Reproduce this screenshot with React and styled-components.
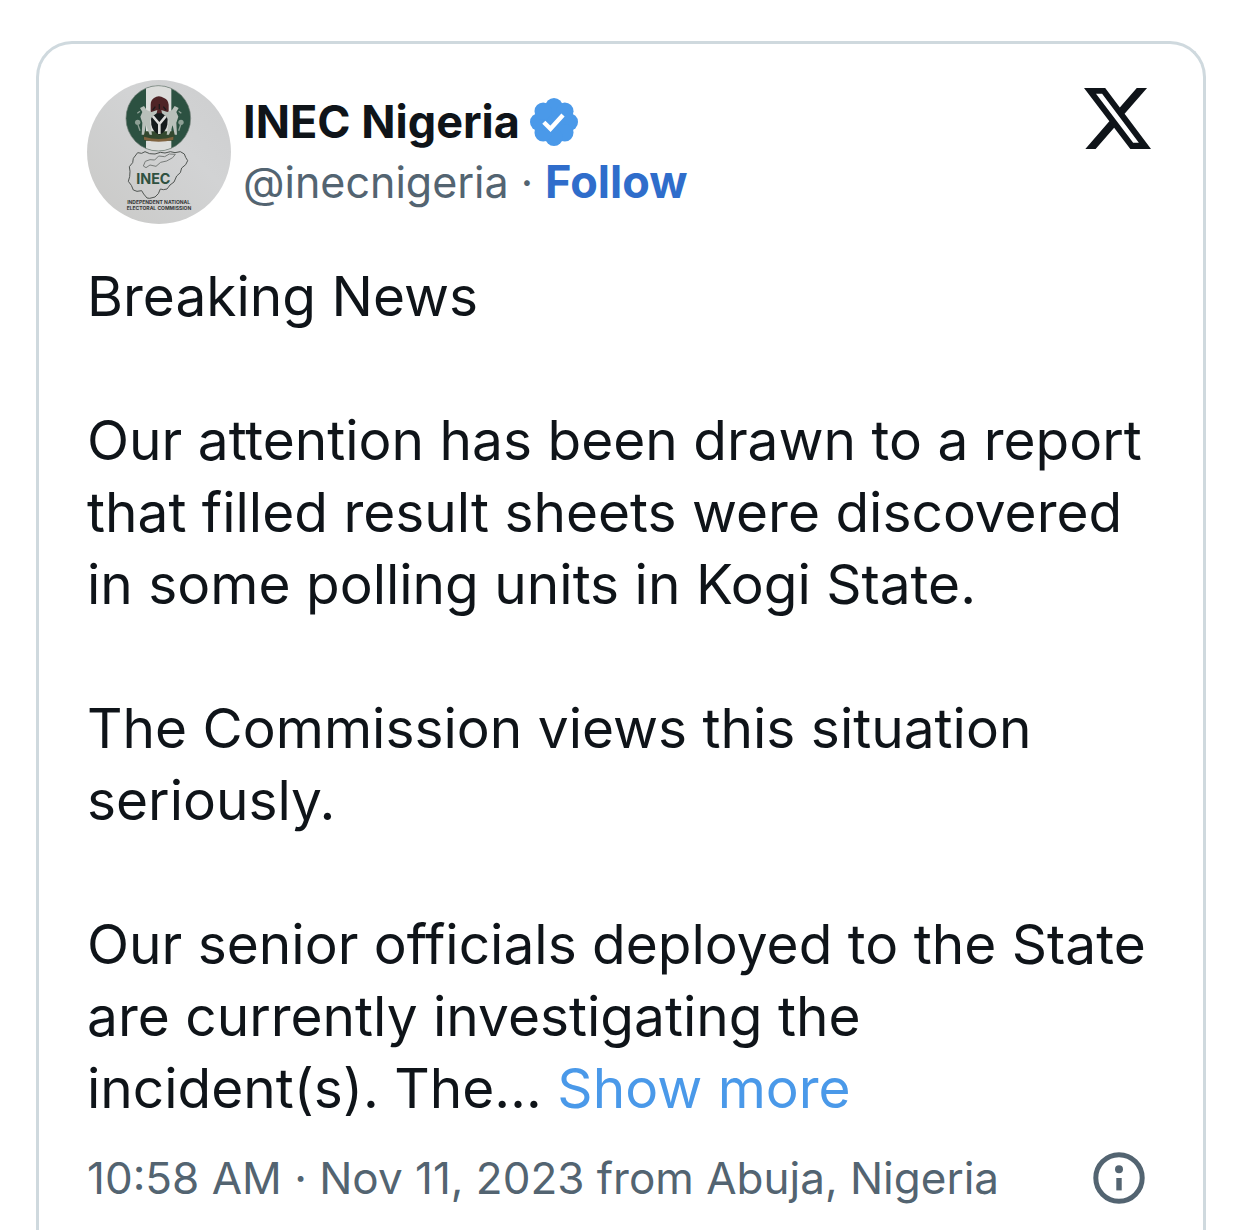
import styled, { createGlobalStyle } from "styled-components";

const paragraphs = [
  "Breaking News",
  "Our attention has been drawn to a report that filled result sheets were discovered in some polling units in Kogi State.",
  "The Commission views this situation seriously.",
];

const petals = [0, 45, 90, 135, 180, 225, 270, 315];

function AvatarImage() {
  return (
    <svg viewBox="21 24 432 432" role="img" aria-label="INEC Nigeria">
      <defs>
        <linearGradient id="paper" x1="0" y1="1" x2="1" y2="0">
          <stop offset="0" stopColor="#c9c9c7" />
          <stop offset="0.6" stopColor="#d2d3d4" />
          <stop offset="1" stopColor="#cdcecf" />
        </linearGradient>
        <clipPath id="seal">
          <ellipse cx="235" cy="139" rx="97" ry="98" />
        </clipPath>
      </defs>
      <rect x="21" y="24" width="432" height="432" fill="url(#paper)" />

      {/* coat of arms on the flag */}
      <g clipPath="url(#seal)">
        <rect x="138" y="40" width="194" height="200" fill="#2c5141" />
        <rect x="198" y="40" width="76" height="200" fill="#dcdddb" />
        <path d="M184 178h104l-8 28h-88z" fill="#33482f" />
        <path d="M192 194q44 14 88 0v9q-44 12-88 0z" fill="#80633f" />
        <path
          d="M222 78q14-10 30 0 12 4 14 20v24l-12 14h-30l-12-14v-24q0-14 10-20z"
          fill="#4f2426"
        />
        <path
          d="M226 104l-8 10M250 104l8 10M238 96v16"
          fill="none"
          stroke="#1c1a1c"
          strokeWidth="4"
        />
        <path d="M212 124h52l-2 34q-4 22-24 30-20-8-24-30z" fill="#151b1c" />
        <path
          d="M218 132l20 24 20-24M238 154v32"
          fill="none"
          stroke="#dcdcda"
          strokeWidth="8"
        />
        <path
          d="M180 108l12-6 8 12 14 6 18-6-2 10-14 10-6 14 6 40h-7l-11-28-6 28h-7l2-36-6-18 6-14z"
          fill="#b9c0ba"
        />
        <path
          d="M296 108l-12-6-8 12-14 6-18-6 2 10 14 10 6 14-6 40h7l11-28 6 28h7l-2-36 6-18-6-14z"
          fill="#b9c0ba"
        />
        <g fill="#8fa196">
          <circle cx="173" cy="151" r="8" />
          <circle cx="303" cy="151" r="8" />
        </g>
        <path
          d="M174 158l6 18M302 158l-6 18M180 118l-8 6M296 118l8 6"
          fill="none"
          stroke="#8fa196"
          strokeWidth="4"
        />
      </g>
      <ellipse
        cx="235"
        cy="139"
        rx="97"
        ry="98"
        fill="none"
        stroke="#6f7d75"
        strokeWidth="2"
      />

      {/* outline of the country */}
      <path
        d="M173 242l12 2 10-5 14 6 16 1 16-5 14 2 16-4 14 3 16-3 12 7 4 10 6 10-6 12-12 10-4 14-11 10-8 18-12 9-9 12-11 2-9-2-6 14-10 10-16 4-8-1-10-12-6-10-14 2-11-4-6-14-9-12 4-14 1-16-2-14 10-12 2-13z"
        fill="none"
        stroke="#505552"
        strokeWidth="3"
        strokeLinejoin="round"
      />
      <path
        d="M190 282l6-14 14-5 14 1 12-12 18 2 14-8 18 1-8 10-18 10-18 4-14 12-18-4-12 8z"
        fill="none"
        stroke="#777b79"
        strokeWidth="3"
        strokeLinejoin="round"
      />
      <AvatarText x="220" y="335" fontSize="43" fill="#2f5140">
        INEC
      </AvatarText>
      <AvatarText x="236" y="396" fontSize="15" fill="#343638">
        INDEPENDENT NATIONAL
      </AvatarText>
      <AvatarText x="237" y="415" fontSize="15" fill="#343638">
        ELECTORAL COMMISSION
      </AvatarText>
    </svg>
  );
}

function VerifiedBadge() {
  return (
    <svg
      width="48"
      height="48"
      viewBox="0 0 48 48"
      role="img"
      aria-label="Verified account"
    >
      <g fill="#4a99e9">
        <circle cx="24" cy="24" r="18" />
        {petals.map((angle) => (
          <circle
            key={angle}
            cx="24"
            cy="8.7"
            r="8.7"
            transform={`rotate(${angle} 24 24)`}
          />
        ))}
      </g>
      <path
        d="M13.8 24.2l6.7 6.6L33 17"
        fill="none"
        stroke="#fff"
        strokeWidth="4.4"
      />
    </svg>
  );
}

function XLogo() {
  return (
    <svg
      width="67"
      height="61"
      viewBox="1.254 2.25 21.573 19.5"
      preserveAspectRatio="none"
      aria-hidden="true"
    >
      <path
        d="M18.244 2.25h3.308l-7.227 8.26 8.502 11.24H16.17l-5.214-6.817L4.99 21.75H1.68l7.73-8.835L1.254 2.25H8.08l4.713 6.231zm-1.161 17.52h1.833L7.084 4.126H5.117z"
        fill="#0f1419"
      />
    </svg>
  );
}

function InfoIcon() {
  return (
    <svg width="52" height="52" viewBox="0 0 52 52" aria-hidden="true">
      <circle
        cx="26"
        cy="26"
        r="23.2"
        fill="none"
        stroke="#536471"
        strokeWidth="5"
      />
      <circle cx="26" cy="17.3" r="4" fill="#536471" />
      <rect x="23.3" y="26" width="5.4" height="12.4" fill="#536471" />
    </svg>
  );
}

export default function App() {
  return (
    <>
      <GlobalStyle />
      <Page>
        <Card>
          <Header>
            <Avatar href="#profile">
              <AvatarImage />
            </Avatar>
            <Author>
              <NameRow>
                <Name href="#profile">INEC Nigeria</Name>
                <VerifiedBadge />
              </NameRow>
              <HandleRow>
                <Handle href="#profile">@inecnigeria</Handle>
                <span>·</span>
                <Follow href="#follow">Follow</Follow>
              </HandleRow>
            </Author>
            <IconLink href="#post" aria-label="View on X">
              <XLogo />
            </IconLink>
          </Header>

          <Body>
            {paragraphs.map((text) => (
              <p key={text}>{text}</p>
            ))}
            <p>
              Our senior officials deployed to the State are currently
              investigating the incident(s). The…{" "}
              <ShowMore href="#more">Show more</ShowMore>
            </p>
          </Body>

          <Footer>
            <Timestamp href="#post">
              10:58 AM · Nov 11, 2023 from Abuja, Nigeria
            </Timestamp>
            <InfoButton type="button" aria-label="Information">
              <InfoIcon />
            </InfoButton>
          </Footer>
        </Card>
      </Page>
    </>
  );
}

const GlobalStyle = createGlobalStyle`
  * {
    box-sizing: border-box;
  }

  body {
    margin: 0;
    background: #fff;
    color: #0f1419;
    font-family: Inter, "Liberation Sans", sans-serif;
  }

  p {
    margin: 0;
  }

  a {
    color: inherit;
    text-decoration: none;
  }

  svg {
    display: block;
    flex-shrink: 0;
  }
`;

const Page = styled.main`
  display: flex;
  min-height: 100vh;
  padding: 41px 36px 0;
`;

const Card = styled.article`
  flex: 1;
  min-width: 0;
  padding: 36px 48px 0;
  border: 3px solid #cfd9de;
  border-bottom: none;
  border-radius: 36px 36px 0 0;
`;

const Header = styled.header`
  display: flex;
  align-items: flex-start;
  gap: 12px;
`;

const Avatar = styled.a`
  flex-shrink: 0;
  width: 144px;
  height: 144px;
  border-radius: 50%;
  overflow: hidden;
`;

const AvatarText = styled.text`
  font-family: Inter, sans-serif;
  font-weight: 700;
  text-anchor: middle;
`;

const Author = styled.div`
  flex: 1;
  min-width: 0;
  padding-top: 12px;
  font-size: 43px;
  line-height: 60px;
`;

const NameRow = styled.div`
  display: flex;
  align-items: center;
  gap: 10px;
`;

const Name = styled.a`
  font-size: 45px;
  font-weight: 700;
`;

const HandleRow = styled.div`
  display: flex;
  align-items: baseline;
  gap: 12px;
  color: #536471;
`;

const Handle = styled.a`
  color: #536471;
`;

const Follow = styled.a`
  color: #2f6dcb;
  font-size: 45px;
  font-weight: 700;
`;

const IconLink = styled.a`
  display: flex;
  align-items: center;
  justify-content: center;
  width: 76px;
  height: 76px;
`;

const Body = styled.div`
  display: flex;
  flex-direction: column;
  gap: 72px;
  margin-top: 36px;
  font-size: 55px;
  line-height: 72px;
`;

const ShowMore = styled.a`
  color: #4a99e9;
`;

const Footer = styled.footer`
  display: flex;
  align-items: center;
  justify-content: space-between;
  margin-top: 24px;
  font-size: 44px;
  line-height: 60px;
`;

const Timestamp = styled.a`
  color: #536471;
`;

const InfoButton = styled.button`
  display: flex;
  align-items: center;
  justify-content: center;
  width: 72px;
  height: 60px;
  padding: 0;
  border: none;
  background: none;
  cursor: pointer;
`;
